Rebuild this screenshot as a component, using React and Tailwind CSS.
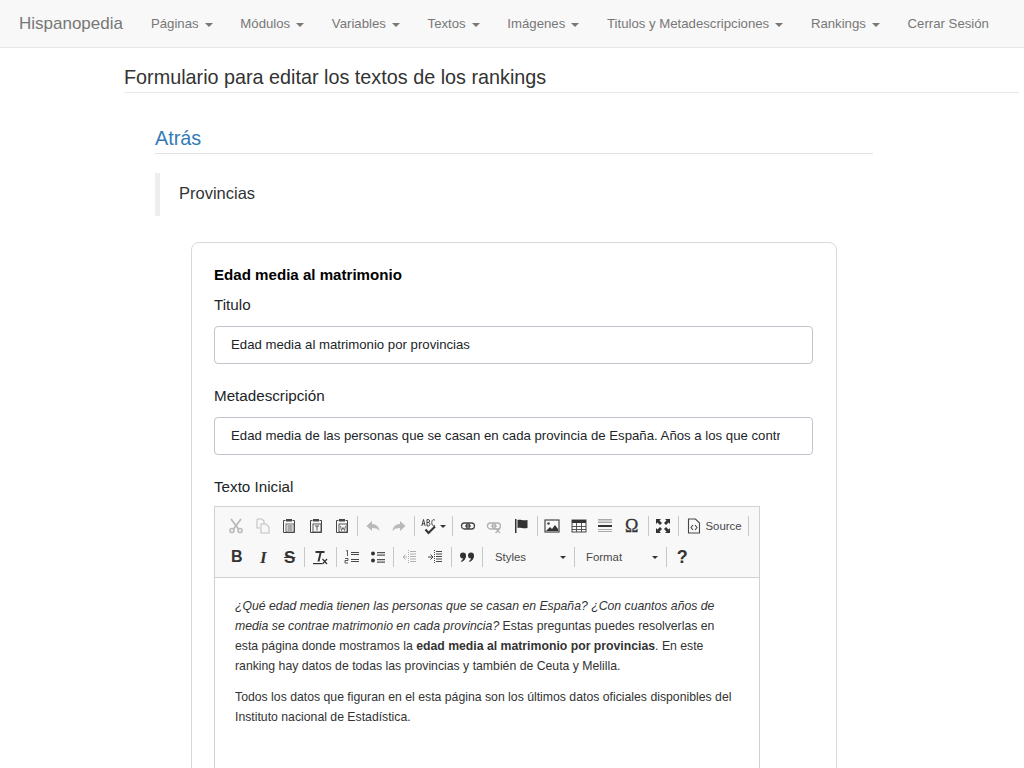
const G = ({ children, o = 1 }) => (
  <svg width="16" height="16" viewBox="0 0 16 16" fill="none" stroke="#474747" strokeWidth="1.1" style={{ opacity: o }}>{children}</svg>
);
const Cut = () => (<G o={0.35}><circle cx="4" cy="12.5" r="2" strokeWidth="1.6"/><circle cx="12" cy="12.5" r="2" strokeWidth="1.6"/><path d="M3 1l7.5 10M13 1L5.5 11" strokeWidth="1.8"/></G>);
const Copy = () => (<G o={0.3}><path d="M2 1h5l2 2v3M2 1v9h3"/><path d="M6 6h5l3 3v6H6z"/></G>);
const Clip = ({ k }) => (
  <G>
    <path d="M4.500 2.500H2.500v12h11v-12h-2" strokeWidth="1"/>
    <rect x="5" y="1" width="6" height="2.500" fill="#474747" stroke="none"/>
    {k === "p" && <><rect x="5" y="6" width="8" height="8" strokeWidth=".8"/><path d="M6.500 8h5M6.500 10h5M6.500 12h5" strokeWidth=".9"/></>}
    {k !== "p" && <rect x="5" y="6" width="8" height="8" strokeWidth=".9"/>}
    {k === "t" && <path d="M7 8h4M9 8v4.500" strokeWidth=".9"/>}
    {k === "w" && <path d="M6.500 8l1 4.500L9 9.500l1.500 3 1-4.500" strokeWidth=".8"/>}
  </G>
);
const Undo = ({ flip }) => (
  <svg width="16" height="16" viewBox="0 0 16 16" style={{ opacity: 0.35, transform: flip ? "scaleX(-1)" : undefined }}>
    <path d="M7 3L1.500 8 7 13V10c3 0 5.500 .6 7.500 3-.4-4-3-7-7.500-7z" fill="#474747"/>
  </svg>
);
const Spell = () => (
  <span className="flex items-center">
    <svg width="17" height="17" viewBox="0 0 17 17" fill="none" stroke="#333">
      <path d="M.8 8l1.700-6.500L4.200 8M1.400 5.800h2.200M6 1.500V8M6 1.500h1.300c1.700 0 1.700 3 0 3H6M7.300 4.500c2.100 0 2.100 3.500 0 3.500H6M14 2.500C13 1 10.800 1.300 10.800 4.700S13 8.400 14 7" strokeWidth=".9"/>
      <path d="M4.500 11.500l3 3.500 6.500-6.500" strokeWidth="2.100"/>
    </svg>
    <span className="ml-[2px] border-x-[3px] border-t-[3px] border-x-transparent border-t-[#333] w-0 h-0" />
  </span>
);
const Link = ({ o = 1, x }) => (
  <G o={o}>
    <rect x="1.500" y="5" width="8" height="6" rx="3" strokeWidth="1.300"/>
    <rect x="6.500" y="5" width="8" height="6" rx="3" strokeWidth="1.300"/>
    <path d="M5 8h6" strokeWidth="1.200"/>
    {x && <path d="M9.500 10.500l4.500 4.500M14 10.500L9.500 15" stroke="#474747" strokeWidth="1.200"/>}
  </G>
);
const Flag = () => (<svg width="16" height="16" viewBox="0 0 16 16"><path d="M2 1h1.500v14H2z" fill="#333"/><path d="M4.500 2c3-1 5 1 10 0v8c-5 1-7-1-10 0z" fill="#333"/></svg>);
const Image = () => (<G><rect x="1" y="2" width="14" height="12" strokeWidth="1.200"/><circle cx="4.500" cy="5.500" r="1.300" fill="#474747" stroke="none"/><path d="M2 13l4-4 2 2 3-4 3 4v2z" fill="#333" stroke="none"/></G>);
const Table = () => (<G><rect x="1" y="2" width="14" height="12" strokeWidth="1"/><rect x="1" y="2" width="14" height="3" fill="#333" stroke="none"/><path d="M1 8.500h14M1 11.500h14M5.500 5v9M10.500 5v9" strokeWidth=".9"/></G>);
const Hr = () => (<svg width="16" height="16" viewBox="0 0 16 16"><path d="M1 1h14v1.500H1zM1 3.500h14V5H1z" fill="#aaa"/><path d="M1 7h14v2H1z" fill="#333"/><path d="M1 11h14v1H1zM1 13h14v1H1z" fill="#aaa"/></svg>);
const Max = () => (<svg width="16" height="16" viewBox="0 0 16 16"><path d="M1 1h5L4.500 2.500 7 5 5 7 2.500 4.500 1 6zM15 1v5l-1.500-1.500L11 7 9 5l2.500-2.500L10 1zM1 15v-5l1.500 1.500L5 9l2 2-2.500 2.500L6 15zM15 15h-5l1.500-1.500L9 11l2-2 2.500 2.500L15 10z" fill="#333"/></svg>);
const Src = () => (<G><path d="M2.500 1h7l4 4v10h-11z" strokeWidth="1.100"/><path d="M7 7L5 9.500 7 12M9 7l2 2.500L9 12" strokeWidth="1.100"/></G>);
const Bold = () => <span className="text-[16px] font-bold text-[#333] leading-none" style={{ fontFamily: '"Liberation Sans", sans-serif' }}>B</span>;
const Ital = () => <span className="text-[17px] font-bold italic text-[#333] leading-none" style={{ fontFamily: '"Liberation Serif", serif' }}>I</span>;
const Strike = () => <span className="text-[17px] font-bold line-through text-[#333] leading-none" style={{ fontFamily: '"Liberation Sans", sans-serif' }}>S</span>;
const Tx = () => (<svg width="16" height="16" viewBox="0 0 16 16"><path d="M3.500 2h9v2h-3l-2 8.500h-2L7.500 4h-4z" fill="#333"/><path d="M1 14h9v1.200H1z" fill="#333"/><path d="M10.500 10l4.500 5M15 10l-4.500 5" stroke="#333" strokeWidth="1.200"/></svg>);
const Ol = () => (<G><path d="M7 3.500h8M7 5.500h8M7 10.500h8M7 12.500h8" strokeWidth="1.100"/><path d="M2 2l1.500-.5V7M1 9.500h3v2H1v2.500h3" strokeWidth=".9"/></G>);
const Ul = () => (<svg width="16" height="16" viewBox="0 0 16 16"><circle cx="3" cy="4.500" r="2" fill="#333"/><circle cx="3" cy="11.500" r="2" fill="#333"/><path d="M7 3h8v1.200H7zM7 5.500h8v1.200H7zM7 10h8v1.200H7zM7 12.500h8v1.200H7z" fill="#555"/></svg>);
const Dent = ({ o = 1, right }) => (
  <G o={o}>
    <path d="M9 2.500h6M9 5h6M9 7.500h6M9 10h6M9 12.500h6" strokeWidth="1"/>
    <path d={right ? "M1 8h4M3.500 5.500L6 8l-2.500 2.500" : "M6 8H2M4.500 5.500L2 8l2.500 2.500"} strokeWidth="1" />
    <path d="M7.500 1v14" strokeWidth="1" strokeDasharray="1 1"/>
  </G>
);
const Quote = () => (<svg width="16" height="16" viewBox="0 0 16 16"><circle cx="4" cy="6.500" r="3" fill="#333"/><path d="M7 6.500c0 3.500-2 5.500-4.500 6.500L2 12c1.500-1 2-2 2-3z" fill="#333"/><circle cx="12" cy="6.500" r="3" fill="#333"/><path d="M15 6.500c0 3.500-2 5.500-4.500 6.500L10 12c1.500-1 2-2 2-3z" fill="#333"/></svg>);

const Btn = ({ children, w = "w-[26.5px]" }) => <span className={`${w} h-[24px] flex items-center justify-center shrink-0`}>{children}</span>;
const Sep = ({ l = 1, r = 2 }) => <span className="w-px h-[20px] bg-[#c8c8c8] shrink-0" style={{ marginLeft: l, marginRight: r }} />;
const Caret = () => <span className="inline-block ml-[6px] border-x-[4px] border-t-[4px] border-x-transparent border-t-current align-middle" />;
const NavItem = ({ t, caret = true }) => (
  <span className="px-[13.85px] text-[13.2px] text-[#777] whitespace-nowrap">{t}{caret && <Caret />}</span>
);

const Combo = ({ t, w }) => (
  <span className={`${w} h-[24px] flex items-center justify-between text-[11.4px] text-[#484848] shrink-0 pt-[1px]`}>
    <span>{t}</span>
    <span className="border-x-[3px] border-t-[3px] border-x-transparent border-t-[#333]" />
  </span>
);

export default function App() {
  return (
    <div className="h-screen overflow-hidden bg-white text-[#333] text-[13.2px]" style={{ fontFamily: '"Liberation Sans", Arial, sans-serif' }}>
      <nav className="h-[48px] bg-[#f8f8f8] border-b border-[#e7e7e7] flex items-center pl-[19px] pt-[1px]">
        <span className="mr-[14.15px] text-[17px] text-[#777]">Hispanopedia</span>
        <div className="flex items-center">
          <NavItem t="Páginas" />
          <NavItem t="Módulos" />
          <NavItem t="Variables" />
          <NavItem t="Textos" />
          <NavItem t="Imágenes" />
          <NavItem t="Titulos y Metadescripciones" />
          <NavItem t="Rankings" />
          <NavItem t="Cerrar Sesión" caret={false} />
        </div>
      </nav>
      <main className="pl-[124px] pr-[5px]">
        <h1 className="mt-[17px] pb-[3px] text-[19.8px] leading-[24px] font-normal border-b border-[#e8e8e8]">Formulario para editar los textos de los rankings</h1>
        <div className="ml-[31px] w-[718px]">
          <h2 className="mt-[33px] pb-[3px] text-[19.8px] leading-[24px] text-[#337ab7] border-b border-[#e2e2e2]">Atrás</h2>
          <div className="mt-[19px] h-[43px] border-l-[5px] border-[#eee] pl-[19px] pb-[2px] flex items-center text-[16.5px]">Provincias</div>
          <section className="mt-[26px] ml-[36px] w-[646px] h-[600px] border border-[#d9d9d9] rounded-[8px] px-[22px] pt-[22px] text-[#212529]">
            <h3 className="text-[15.1px] leading-[20px] font-bold text-black">Edad media al matrimonio</h3>
            <label className="block mt-[8px] text-[15.2px] leading-[24px]">Titulo</label>
            <div className="mt-[9px] w-[599px] h-[37.5px] border border-[#bfc5ca] rounded-[4px] px-[16px] flex items-center whitespace-nowrap overflow-hidden">Edad media al matrimonio por provincias</div>
            <label className="block mt-[20.5px] text-[15.2px] leading-[24px]">Metadescripción</label>
            <div className="mt-[9px] w-[599px] h-[37.5px] border border-[#bfc5ca] rounded-[4px] pl-[16px] pr-[32px] flex items-center whitespace-nowrap overflow-hidden">
              <span className="block overflow-hidden">Edad media de las personas que se casan en cada provincia de España. Años a los que contraen matrimonio</span>
            </div>
            <label className="block mt-[20.5px] text-[15.2px] leading-[24px]">Texto Inicial</label>
            <div className="mt-[7px] w-[546px] h-[300px] border border-[#d1d1d1] text-[#333]">
              <div className="h-[71px] bg-[#f8f8f8] border-b border-[#d1d1d1] pl-[8px] pt-[7px]">
                <div className="flex items-center h-[24px]">
                  <Btn><Cut /></Btn><Btn><Copy /></Btn><Btn><Clip k="p" /></Btn><Btn><Clip k="t" /></Btn><Btn><Clip k="w" /></Btn>
                  <Sep /><Btn><Undo /></Btn><Btn><Undo flip /></Btn>
                  <Sep /><Btn w="w-[34px]"><Spell /></Btn>
                  <Sep /><Btn><Link /></Btn><Btn><Link o={0.4} x /></Btn><Btn><Flag /></Btn>
                  <Sep l={3} r={1} /><Btn><Image /></Btn><Btn><Table /></Btn><Btn><Hr /></Btn>
                  <Btn><span className="text-[18px] leading-none text-[#333]" style={{ fontFamily: '"Liberation Serif", serif', WebkitTextStroke: "0.3px #333" }}>Ω</span></Btn>
                  <Sep l={3} r={1} /><Btn><Max /></Btn>
                  <Sep l={1} />
                  <span className="flex items-center h-[24px] w-[66px] shrink-0 pl-[5px] gap-[4px] text-[11.4px] text-[#484848]"><Src /><span className="pt-[1px]">Source</span></span>
                  <Sep l={1} />
                </div>
                <div className="flex items-center h-[24px] mt-[7px]">
                  <span className="w-[0.5px] shrink-0" />
                  <Btn><Bold /></Btn><Btn><Ital /></Btn><Btn><Strike /></Btn>
                  <Sep /><Btn><Tx /></Btn>
                  <Sep l={2} /><Btn><Ol /></Btn><Btn><Ul /></Btn>
                  <Sep /><Btn><Dent o={0.4} /></Btn><Btn><Dent right /></Btn>
                  <Sep l={2} /><Btn><Quote /></Btn>
                  <Sep l={2} r={12} />
                  <Combo t="Styles" w="w-[71px]" />
                  <Sep l={8} r={11} />
                  <Combo t="Format" w="w-[72px]" />
                  <Sep l={8} r={2} />
                  <Btn><span className="text-[18px] font-bold leading-none text-[#333]">?</span></Btn>
                </div>
              </div>
              <div className="px-[20px] pt-[18px] text-[12.25px] leading-[20px]">
                <p><em>¿Qué edad media tienen las personas que se casan en España? ¿Con cuantos años de media se contrae matrimonio en cada provincia?</em> Estas preguntas puedes resolverlas en esta página donde mostramos la <strong>edad media al matrimonio por provincias</strong>. En este ranking hay datos de todas las provincias y también de Ceuta y Melilla.</p>
                <p className="mt-[11px]">Todos los datos que figuran en el esta página son los últimos datos oficiales disponibles del Instituto nacional de Estadística.</p>
              </div>
            </div>
          </section>
        </div>
      </main>
    </div>
  );
}
